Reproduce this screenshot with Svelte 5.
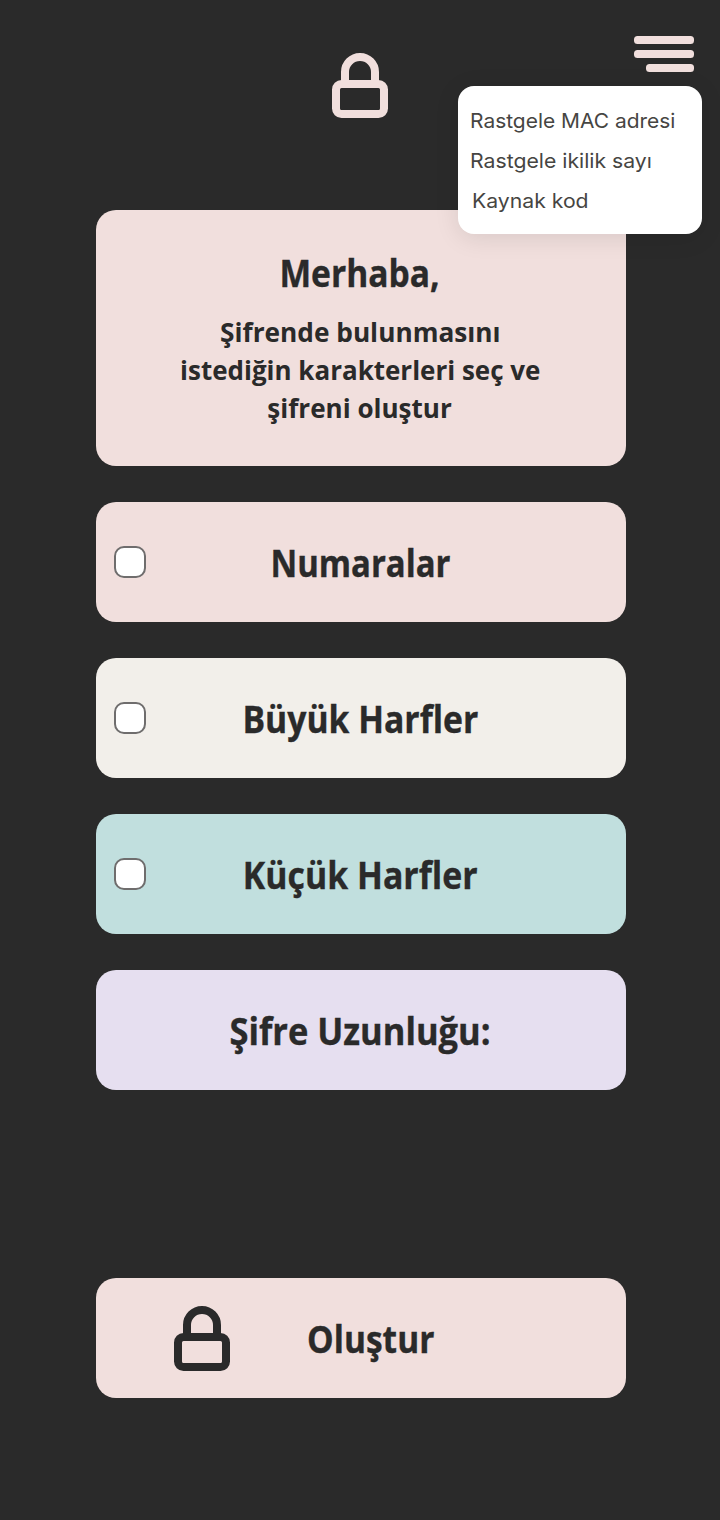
<script>
  const options = [
    { label: 'Numaralar', tone: 'pink', fit: 0.896 },
    { label: 'Büyük Harfler', tone: 'cream', fit: 0.919 },
    { label: 'Küçük Harfler', tone: 'teal', fit: 0.923 }
  ];
  const lines = [
    { text: 'Şifrende bulunmasını', fit: 0.972 },
    { text: 'istediğin karakterleri seç ve', fit: 0.962 },
    { text: 'şifreni oluştur', fit: 0.965 }
  ];
  const links = [
    { text: 'Rastgele MAC adresi', fit: 1.033 },
    { text: 'Rastgele ikilik sayı', fit: 1.046 },
    { text: 'Kaynak kod', fit: 1.045 }
  ];
</script>

{#snippet lock()}
  <svg class="lock" viewBox="0 0 56 66" fill="none" stroke="currentColor" stroke-width="8" aria-hidden="true">
    <rect x="4" y="31" width="48" height="30" rx="5.5" />
    <path d="M13 31V19a15 15 0 0 1 30 0v12" />
  </svg>
{/snippet}

{#snippet fitted(text, fit)}
  <span class="fit" style="transform: scaleX({fit})">{text}</span>
{/snippet}

<div class="page">
  <header>
    {@render lock()}
    <nav>
      <button class="burger" aria-label="Menü"><i></i><i></i><i></i></button>
      <div class="menu">
        {#each links as link}<a href="#top">{@render fitted(link.text, link.fit)}</a>{/each}
      </div>
    </nav>
  </header>
  <main>
    <section class="card intro pink">
      <h1>{@render fitted('Merhaba,', 0.915)}</h1>
      <div class="lead">
        {#each lines as line}<p>{@render fitted(line.text, line.fit)}</p>{/each}
      </div>
    </section>
    {#each options as o}
      <label class="card row {o.tone}"><input type="checkbox" /><h2>{@render fitted(o.label, o.fit)}</h2></label>
    {/each}
    <section class="card row lilac"><h2>{@render fitted('Şifre Uzunluğu:', 0.939)}</h2></section>
    <button class="card row pink create">{@render lock()}<h2>{@render fitted('Oluştur', 0.913)}</h2></button>
  </main>
</div>

<style>
  :global(body) { background: #2a2a2a; }
  * { box-sizing: border-box; }
  .page { height: 1520px; overflow: hidden; background: #2a2a2a; color: #2a2a2a; font-family: 'Open Sans', 'Noto Sans', sans-serif; }
  header { height: 210px; padding-top: 53px; display: flex; justify-content: center; color: #f1dfdd; position: relative; }
  .lock { width: 56px; height: 66px; display: block; flex: none; }
  nav { position: absolute; top: 36px; right: 18px; width: 244px; z-index: 2; display: flex; flex-direction: column; align-items: flex-end; gap: 14px; }
  .burger { width: 60px; margin: 0 8px 0 0; padding: 0; border: 0; background: none; display: flex; flex-direction: column; align-items: flex-end; gap: 6px; }
  .burger i { width: 60px; height: 8px; border-radius: 3.5px; background: #f1dfdd; }
  .burger i:last-child { width: 48px; }
  .menu { width: 244px; height: 148px; padding: 15px 11.5px; border-radius: 16px; background: #fff; box-shadow: 0 4px 24px rgba(0, 0, 0, 0.1); }
  .menu a { display: block; height: 40px; font: 400 20.3px/40px Inter, sans-serif; color: #464542; text-decoration: none; white-space: nowrap; }
  .menu a:last-child { padding-left: 2px; }
  .menu .fit { transform-origin: left center; }
  .fit { display: inline-block; white-space: nowrap; }
  main { width: 530px; margin-left: 96px; display: flex; flex-direction: column; gap: 36px; }
  .card { width: 530px; border: 0; border-radius: 20px; text-align: center; color: inherit; font-family: inherit; }
  .pink { background: #f1dfdd; }
  .cream { background: #f2efea; }
  .teal { background: #c1dfde; }
  .lilac { background: #e6dff0; }
  .intro { height: 256px; padding: 38px 2px 0 0; }
  h1, h2 { margin: 0; font-size: 36.7px; line-height: 50px; font-weight: 700; white-space: nowrap; -webkit-text-stroke: 0.35px currentColor; }
  .lead { padding-top: 15px; }
  p { margin: 0; font-size: 27px; line-height: 38px; font-weight: 700; }
  .row { height: 120px; display: grid; grid-template-columns: 1fr; align-items: center; padding: 0 18px; }
  .row > :global(*) { grid-area: 1 / 1; }
  .row h2 { padding: 2px 2px 0 0; }
  input { appearance: none; width: 32px; height: 32px; margin: 0; border: 2px solid #6f6d6d; border-radius: 10px; background: #fff; }
  .create { margin-top: 152px; }
  .create .lock { margin: 1px 0 0 60px; }
  .create h2 { padding: 2px 0 0 19px; }
</style>
